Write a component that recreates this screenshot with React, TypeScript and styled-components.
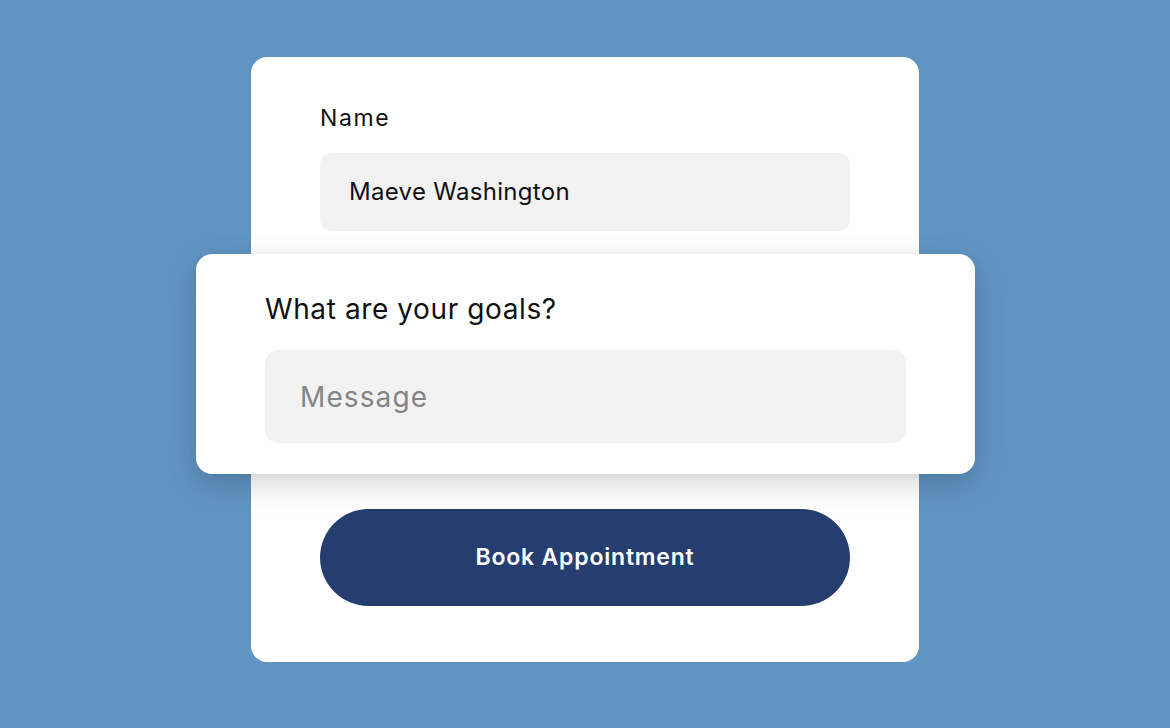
import React from "react";
import styled, { createGlobalStyle } from "styled-components";

const Global = createGlobalStyle`
  html, body { margin: 0; padding: 0; }
  body {
    background: #6094c3;
    font-family: Inter, "Liberation Sans", sans-serif;
    -webkit-font-smoothing: antialiased;
  }
`;

const Page = styled.div`
  width: 1170px;
  height: 728px;
  background: #6094c3;
  display: flex;
  justify-content: center;
  align-items: flex-start;
  padding-top: 57px;
  box-sizing: border-box;
  overflow: hidden;
`;

const Card = styled.div`
  width: 668px;
  height: 605px;
  box-sizing: border-box;
  background: #ffffff;
  border-radius: 16px;
  padding: 48px 69px 56px;
  display: flex;
  flex-direction: column;
`;

const Label = styled.div<{ $size: number; $ls: number }>`
  font-size: ${(p) => p.$size}px;
  color: #111;
  line-height: 1.2;
  letter-spacing: ${(p) => p.$ls}px;
`;

const Field = styled.div<{
  $h: number;
  $pad: number;
  $size: number;
  $ls: number;
  $muted?: boolean;
  $radius: number;
}>`
  height: ${(p) => p.$h}px;
  flex-shrink: 0;
  background: #f2f2f2;
  border-radius: ${(p) => p.$radius}px;
  display: flex;
  align-items: center;
  padding-left: ${(p) => p.$pad}px;
  font-size: ${(p) => p.$size}px;
  color: ${(p) => (p.$muted ? "#858585" : "#111")};
  letter-spacing: ${(p) => p.$ls}px;
`;

const NameGroup = styled.div`
  display: flex;
  flex-direction: column;
  gap: 20px;
`;

const Floating = styled.div`
  margin: 23px -125px 0 -124px;
  height: 220px;
  box-sizing: border-box;
  background: #ffffff;
  border-radius: 16px;
  padding: 39px 69px 0;
  display: flex;
  flex-direction: column;
  gap: 24px;
  box-shadow: 0 10px 32px rgba(0, 0, 0, 0.16), 0 2px 8px rgba(0, 0, 0, 0.05);
  position: relative;
  z-index: 1;
`;

const Button = styled.button`
  margin-top: 35px;
  height: 97px;
  border: none;
  border-radius: 49px;
  background: #263d70;
  color: #ffffff;
  font-family: Inter, "Liberation Sans", sans-serif;
  font-size: 23px;
  font-weight: 600;
  letter-spacing: 0.8px;
  cursor: pointer;
`;

export default function App() {
  return (
    <>
      <Global />
      <Page>
        <Card>
          <NameGroup>
            <Label $size={23} $ls={1.6}>Name</Label>
            <Field $h={78} $pad={29} $size={24} $ls={0.3} $radius={12}>
              Maeve Washington
            </Field>
          </NameGroup>
          <Floating>
            <Label $size={28} $ls={0.6}>What are your goals?</Label>
            <Field $h={93} $pad={35} $size={28} $ls={1.1} $muted $radius={14}>
              Message
            </Field>
          </Floating>
          <Button>Book Appointment</Button>
        </Card>
      </Page>
    </>
  );
}
